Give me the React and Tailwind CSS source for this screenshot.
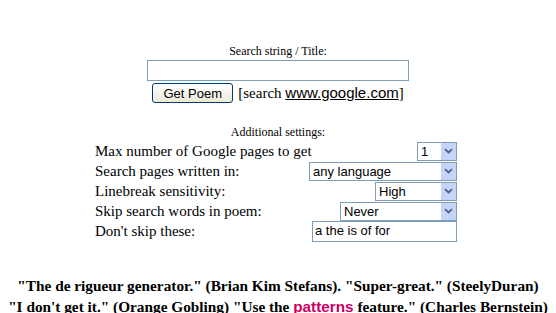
import React from 'react';

const serif = "font-['Liberation_Serif','Times_New_Roman',serif]";
const sans = "font-['Liberation_Sans',Arial,sans-serif]";

const Arrow = () => (
  <span className="flex h-full w-[16px] items-center justify-center border-l border-white bg-[#c5d5f7]">
    <svg width="9" height="6" viewBox="0 0 9 6">
      <path d="M1 1.2 L4.5 4.5 L8 1.2" fill="none" stroke="#4d6185" strokeWidth="1.8" />
    </svg>
  </span>
);

const Select = ({ value, width }) => (
  <div
    className={`flex h-[19px] items-center border border-[#7f9db9] bg-white ${width} ${sans} text-[13px] text-black`}
  >
    <span className="flex-1 pl-[3px] leading-none">{value}</span>
    <Arrow />
  </div>
);

const Row = ({ label, children }) => (
  <div className="flex h-[20px] items-center justify-between">
    <span className="whitespace-nowrap">{label}</span>
    {children}
  </div>
);

export default function App() {
  return (
    <div className={`h-[313px] w-[556px] overflow-hidden bg-white text-black ${serif}`}>
      <div className="flex flex-col items-center pt-[44px]">
        <div className="text-[12px] leading-[15px]">Search string / Title:</div>
        <div className="mt-[1px] h-[21px] w-[262px] border border-[#7f9db9] bg-white" />
        <div className="mt-[2px] flex items-center gap-[5px]">
          <button
            className={`h-[20px] w-[81px] rounded-[3px] border border-[#003c74] bg-gradient-to-b from-white to-[#ece9d8] ${sans} text-[13px] leading-none`}
          >
            Get Poem
          </button>
          <span className="text-[15px] leading-[20px]">
            [search <span className={`${sans} underline`}>www.google.com</span>]
          </span>
        </div>

        <div className="mt-[22px] text-[12px] leading-[15px]">Additional settings:</div>
        <div className="mr-[4px] mt-[1px] w-[362px] text-[15px] leading-[18px]">
          <Row label="Max number of Google pages to get">
            <Select value="1" width="w-[40px]" />
          </Row>
          <Row label="Search pages written in:">
            <Select value="any language" width="w-[148px]" />
          </Row>
          <Row label="Linebreak sensitivity:">
            <Select value="High" width="w-[82px]" />
          </Row>
          <Row label="Skip search words in poem:">
            <Select value="Never" width="w-[117px]" />
          </Row>
          <Row label="Don't skip these:">
            <div
              className={`flex h-[21px] w-[145px] items-center border border-[#7f9db9] bg-white pl-[2px] ${sans} text-[13px]`}
            >
              a the is of for
            </div>
          </Row>
        </div>

        <div className="mt-[35px] whitespace-nowrap text-center text-[15.3px] font-bold leading-[20px]">
          <div>"The de rigueur generator." (Brian Kim Stefans). "Super-great." (SteelyDuran)</div>
          <div className="mt-[1px]">
            "I don't get it." (Orange Gobling) "Use the{' '}
            <span className={`${sans} text-[#cc0066]`}>patterns</span> feature." (Charles Bernstein)
          </div>
        </div>
      </div>
    </div>
  );
}
